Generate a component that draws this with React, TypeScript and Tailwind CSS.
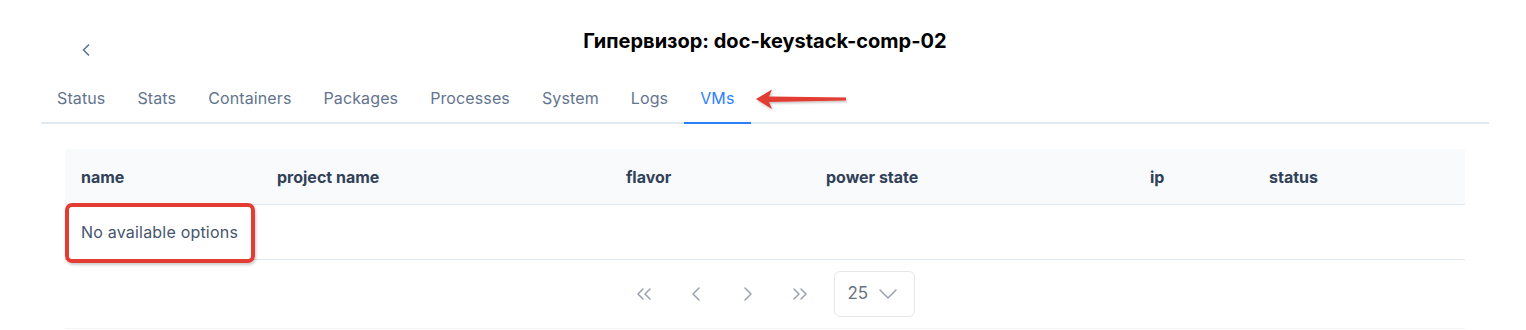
import { ChevronLeft, ChevronDown, ChevronsLeft, ChevronsRight, ChevronRight } from 'lucide-react'

const tabs = ['Status', 'Stats', 'Containers', 'Packages', 'Processes', 'System', 'Logs', 'VMs']

const columns = [
  { label: 'name', w: 'w-[196px]' },
  { label: 'project name', w: 'w-[349px]' },
  { label: 'flavor', w: 'w-[200px]' },
  { label: 'power state', w: 'w-[324px]' },
  { label: 'ip', w: 'w-[119px]' },
  { label: 'status', w: 'flex-1' },
]

function RedArrow() {
  return (
    <svg className="absolute left-[753px] top-[88px]" width="98" height="26" viewBox="0 0 98 26">
      <defs>
        <filter id="sh" x="-10%" y="-30%" width="130%" height="180%">
          <feDropShadow dx="1" dy="1.5" stdDeviation="1" floodColor="#000" floodOpacity="0.25" />
        </filter>
      </defs>
      <path d="M3 11 L19 1.5 L16 8.5 L93 9.5 L93 12.5 L16 14 L19 21 Z" fill="#e23c33" filter="url(#sh)" />
    </svg>
  )
}

export default function App() {
  return (
    <div className="relative w-[1526px] h-[330px] bg-white overflow-hidden" style={{ fontFamily: 'Inter, "Noto Sans", sans-serif' }}>
      <div className="pl-[41px] pr-[37px] pt-[26px]">
        <div className="relative h-[30px] flex items-center justify-center">
          <button className="absolute left-[35px] top-[14px] text-slate-500">
            <ChevronLeft className="w-[20px] h-[20px]" strokeWidth={2} />
          </button>
          <h1 className="text-[20px] font-bold text-black">Гипервизор: doc-keystack-comp-02</h1>
        </div>

        <div className="mt-[18px] flex border-b-2 border-slate-200">
          {tabs.map((t) => {
            const active = t === 'VMs'
            return (
              <div
                key={t}
                className={`px-4 h-[50px] flex items-center text-[16px] tracking-[0.12px] -mb-[2px] ${
                  active ? 'text-blue-500 border-b-2 border-blue-500' : 'text-slate-500 border-b-2 border-transparent'
                }`}
              >
                {t}
              </div>
            )
          })}
        </div>

        <div className="mx-6 mt-[25px]">
          <div className="flex h-[56px] items-center bg-slate-50 border-b border-slate-200">
            {columns.map((c) => (
              <div key={c.label} className={`${c.w} px-4 text-[16px] font-bold text-slate-700`}>
                {c.label}
              </div>
            ))}
          </div>
          <div className="h-[55px] flex items-center px-4 border-b border-slate-200 text-[16px] tracking-[0.2px] text-slate-600">
            No available options
          </div>
          <div className="h-[69px] flex items-center justify-center pl-[16px] border-b border-gray-100 text-gray-400">
            <div className="flex items-center gap-[28px] mr-[22px]">
              <ChevronsLeft className="w-6 h-6" strokeWidth={1.5} />
              <ChevronLeft className="w-6 h-6" strokeWidth={1.5} />
              <ChevronRight className="w-6 h-6" strokeWidth={1.5} />
              <ChevronsRight className="w-6 h-6" strokeWidth={1.5} />
            </div>
            <div className="w-[81px] h-[46px] border border-gray-200 rounded-md flex items-center justify-between pl-[13px] pr-[10px] text-[17px] text-gray-500">
              <span>25</span>
              <ChevronDown className="w-8 h-8 text-gray-400" strokeWidth={1.1} />
            </div>
          </div>
        </div>
      </div>

      <RedArrow />
      <div className="absolute left-[65px] top-[203px] w-[190px] h-[60px] border-4 border-[#e23c33] rounded-[7px] shadow-[1px_2px_3px_rgba(0,0,0,0.2)]" />
    </div>
  )
}
